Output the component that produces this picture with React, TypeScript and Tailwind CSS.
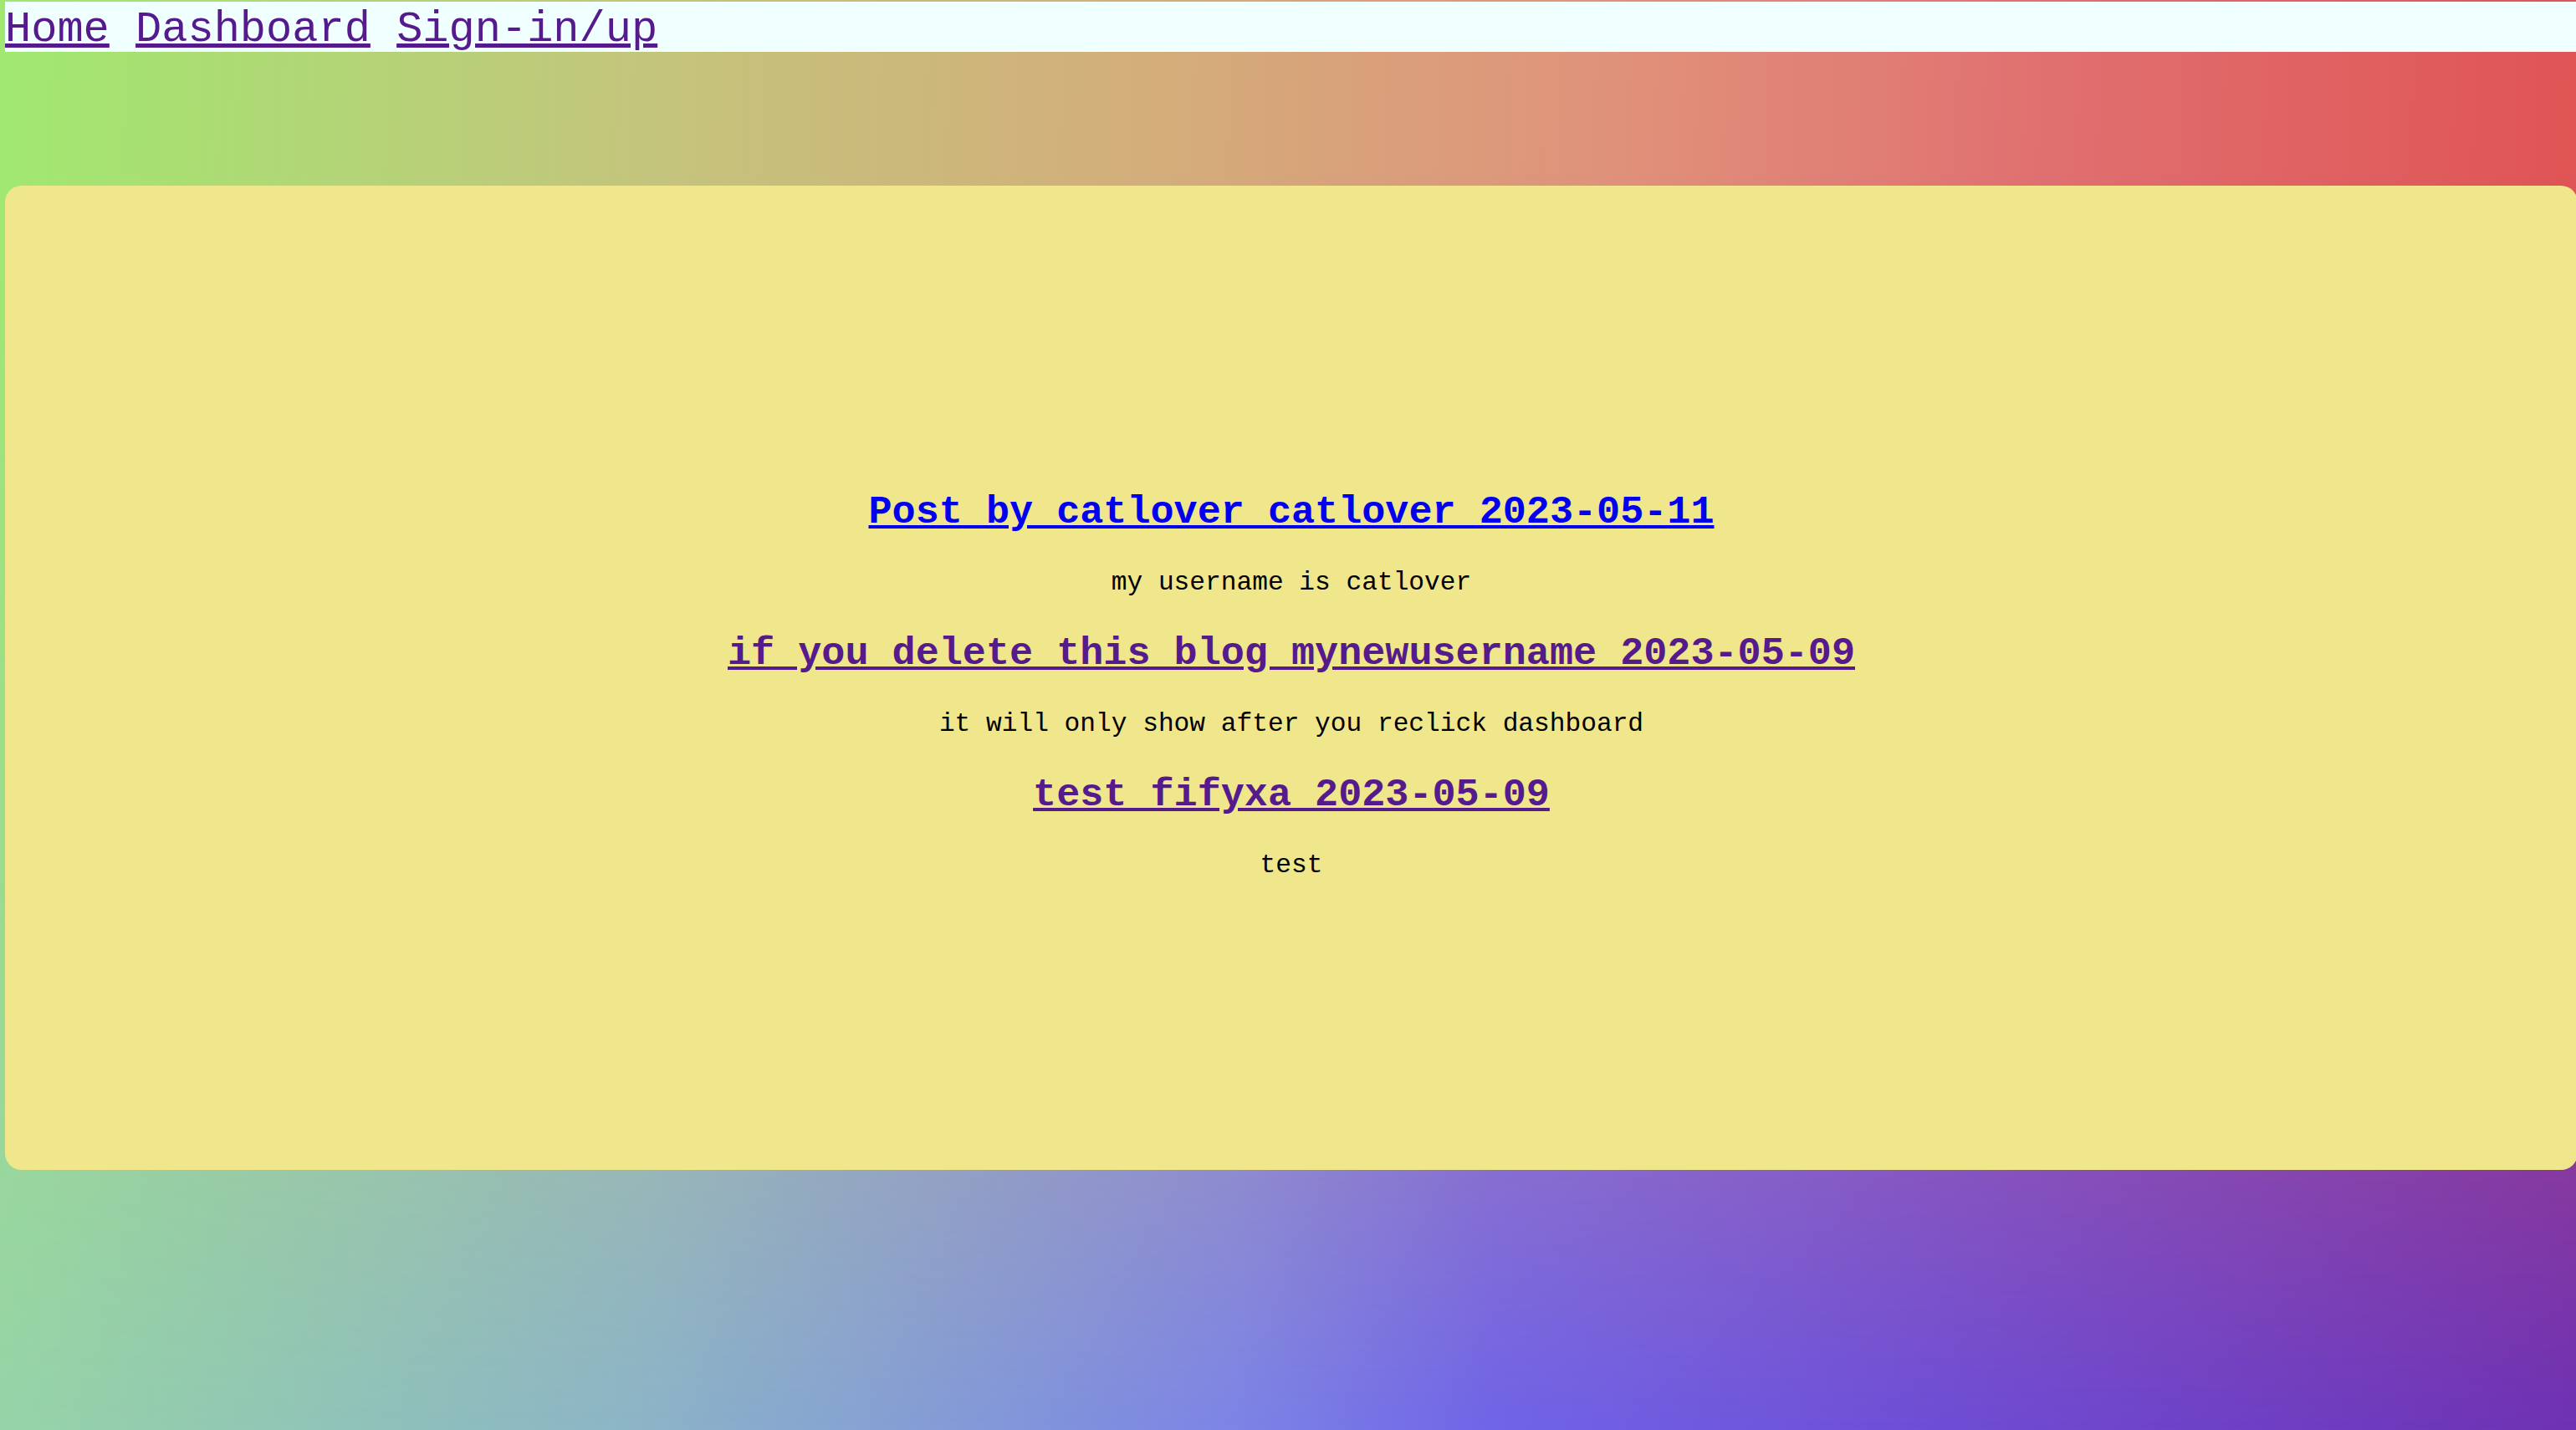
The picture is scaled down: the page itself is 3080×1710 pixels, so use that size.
const posts = [
    { title: "Post by catlover catlover 2023-05-11", body: "my username is catlover", visited: false },
    { title: "if you delete this blog mynewusername 2023-05-09", body: "it will only show after you reclick dashboard", visited: true },
    { title: "test fifyxa 2023-05-09", body: "test", visited: true },
];

export default function App() {
    return (
        <div className="relative min-h-screen w-full overflow-hidden bg-[linear-gradient(90deg,#96d4a8_0%,#8cb4c8_25%,#7c84e6_48%,#7064e8_58%,#6e4ed6_75%,#6e32b4_100%)] font-['Liberation_Mono','Courier_New',monospace]">
            {/* warm top half of the backdrop, fading out toward the bottom */}
            <div className="pointer-events-none absolute inset-0 bg-[linear-gradient(92deg,#a0e870_0%,#c4c47c_25%,#d4ac7a_45%,#e0917a_62%,#e07070_78%,#e05252_100%)] [mask-image:linear-gradient(to_bottom,#000_12%,transparent_100%)]" />

            <div className="relative pl-[6px] pt-[2px]">
                <nav className="h-[60px] bg-[#f0ffff] pt-[7px] text-[52px] leading-[53px] text-[#551a8b]">
                    <a href="#" className="underline">Home</a>{" "}
                    <a href="#" className="underline">Dashboard</a>{" "}
                    <a href="#" className="underline">Sign-in/up</a>
                </nav>

                <main className="mt-[160px] flex h-[1177px] w-[3076px] items-center justify-center rounded-[20px] bg-[#f0e68c] text-center text-black">
                    <div className="pt-[8px]">
                        {posts.map((post, i) => (
                            <div key={i}>
                                <h2 className="my-[40.5px] text-[46.8px] leading-[normal] font-bold">
                                    <a href="#" className={post.visited ? "text-[#551a8b] underline" : "text-[#0000ee] underline"}>
                                        {post.title}
                                    </a>
                                </h2>
                                <p className="my-[31.2px] text-[31.2px] leading-[normal]">{post.body}</p>
                            </div>
                        ))}
                    </div>
                </main>
            </div>
        </div>
    );
}
